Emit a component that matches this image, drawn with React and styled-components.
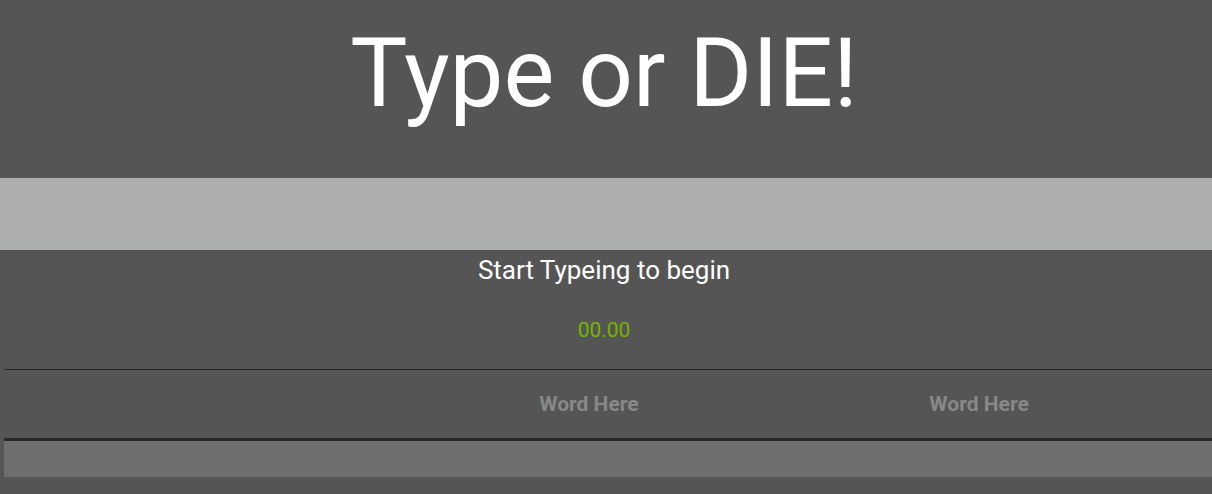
import React from "react";
import styled, { createGlobalStyle } from "styled-components";

const GlobalStyle = createGlobalStyle`
  * { box-sizing: border-box; }
  body {
    margin: 0;
    background: #555555;
    color: #ffffff;
    font-family: Roboto, "Liberation Sans", sans-serif;
    overflow-x: hidden;
  }
`;

const Page = styled.main`
  padding-top: 16px;
`;

const Title = styled.h1`
  margin: 0 4px 48px 0;
  font-size: 96px;
  line-height: 114px;
  font-weight: 400;
  text-align: center;
`;

const WordInput = styled.input`
  display: block;
  width: 100%;
  height: 72px;
  padding: 0 16px;
  border: 0;
  outline: 0;
  background: #adafae;
  color: #ffffff;
  font: inherit;
  font-size: 48px;
  text-align: center;
`;

const Prompt = styled.p`
  margin: 0 4px 0 0;
  font-size: 26px;
  line-height: 40px;
  text-align: center;
`;

const Timer = styled.p`
  margin: 20px 4px 19px 0;
  color: #77b300;
  font-size: 21px;
  line-height: 40px;
  text-align: center;
`;

const TableArea = styled.div`
  padding-left: 4px;
`;

const WordTable = styled.table`
  width: 100%;
  table-layout: fixed;
  border-collapse: separate;
  border-spacing: 0;
`;

const Column = styled.col`
  width: ${({ $width }) => $width};
`;

const HeadCell = styled.th`
  height: 72px;
  padding: 0;
  border-top: 1px solid #282828;
  border-bottom: 3px solid #282828;
  color: #888888;
  font-size: 21px;
  line-height: 24px;
  font-weight: 700;
  text-align: left;
`;

const BodyCell = styled.td`
  height: 36px;
  padding: 0;
  background: #6e6e6e;
`;

export default function App() {
  return (
    <>
      <GlobalStyle />
      <Page>
        <Title>Type or DIE!</Title>
        <WordInput type="text" aria-label="Type the word" />
        <Prompt>Start Typeing to begin</Prompt>
        <Timer>00.00</Timer>
        <TableArea>
          <WordTable>
            <colgroup>
              <Column $width="44.3%" />
              <Column $width="32.3%" />
              <Column $width="23.4%" />
            </colgroup>
            <thead>
              <tr>
                <HeadCell as="td" />
                <HeadCell scope="col">Word Here</HeadCell>
                <HeadCell scope="col">Word Here</HeadCell>
              </tr>
            </thead>
            <tbody>
              <tr>
                <BodyCell />
                <BodyCell />
                <BodyCell />
              </tr>
            </tbody>
          </WordTable>
        </TableArea>
      </Page>
    </>
  );
}
